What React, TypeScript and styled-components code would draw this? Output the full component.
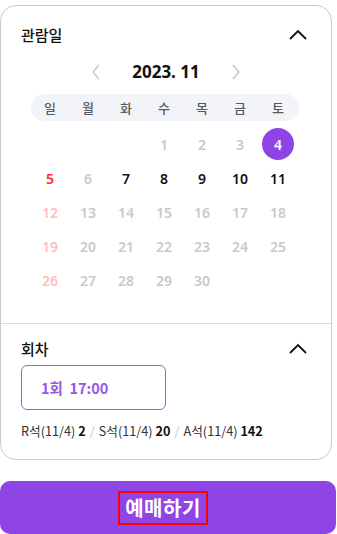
import React from "react";
import styled, { createGlobalStyle } from "styled-components";

const Global = createGlobalStyle`
  html, body { margin: 0; padding: 0; background: #ffffff; }
  body { font-family: "Noto Sans", "Noto Sans CJK KR", sans-serif; }
  * { box-sizing: border-box; }
`;

const Page = styled.div`
  width: 337px;
  padding-top: 5px;
`;

const Card = styled.div`
  width: 332px;
  border: 1px solid #c6cad2;
  border-radius: 16px;
  background: #fff;
  overflow: hidden;
`;

const Section = styled.section<{ $divider?: boolean; $pb: number }>`
  padding: 0 20px ${(p) => p.$pb}px 20px;
  border-top: ${(p) => (p.$divider ? "1px solid #d9dce1" : "none")};
`;

const Header = styled.div<{ $mt: number }>`
  display: flex;
  align-items: center;
  justify-content: space-between;
  height: 24px;
  margin-top: ${(p) => p.$mt}px;
`;

const Title = styled.h2`
  margin: 0;
  font-family: "Noto Sans CJK KR", sans-serif;
  font-size: 15px;
  font-weight: 500;
  line-height: 24px;
  color: #111;
`;

const ToggleIcon = styled.svg`
  width: 20px;
  height: 20px;
  margin-right: 3px;
`;

const MonthNav = styled.div`
  display: flex;
  align-items: center;
  justify-content: center;
  gap: 10px;
  height: 24px;
  margin-top: 13px;
  padding-left: 0px;
`;

const NavArrow = styled.svg`
  width: 20px;
  height: 20px;
`;

const MonthLabel = styled.div`
  width: 100px;
  text-align: center;
  font-size: 17px;
  font-weight: 700;
  line-height: 24px;
  color: #111;
`;

const Calendar = styled.div`
  width: 268px;
  margin-left: 10px;
`;

const WeekBar = styled.div`
  display: grid;
  grid-template-columns: repeat(7, 38px);
  height: 27px;
  margin-top: 10px;
  border-radius: 14px;
  background: #f3f4f8;
  align-items: center;
`;

const WeekDay = styled.span`
  text-align: center;
  font-family: "Noto Sans CJK KR", sans-serif;
  font-size: 13px;
  font-weight: 500;
  line-height: 27px;
  color: #555a60;
`;

const DayGrid = styled.div`
  display: grid;
  grid-template-columns: repeat(7, 38px);
  grid-auto-rows: 34px;
  margin-top: 6px;
`;

type Tone = "black" | "grey" | "red" | "pink" | "selected" | "empty";

const toneColor: Record<Tone, string> = {
  black: "#111111",
  grey: "#c9c9c9",
  red: "#ff2a2a",
  pink: "#ffbdbd",
  selected: "#ffffff",
  empty: "transparent",
};

const DayCell = styled.div`
  display: flex;
  align-items: center;
  justify-content: center;
`;

const DayNum = styled.span<{ $tone: Tone }>`
  display: flex;
  align-items: center;
  justify-content: center;
  flex: none;
  width: 32px;
  height: 32px;
  border-radius: 50%;
  font-size: 14px;
  font-weight: 600;
  color: ${(p) => toneColor[p.$tone]};
  background: ${(p) => (p.$tone === "selected" ? "#8e44e4" : "transparent")};
`;

const TimeBox = styled.div`
  display: flex;
  align-items: center;
  width: 145px;
  height: 45px;
  margin-top: 4px;
  padding-left: 19px;
  border: 1px solid #9b5de6;
  border-radius: 6px;
  font-family: "Noto Sans CJK KR", sans-serif;
  font-size: 14.5px;
  font-weight: 700;
  color: #9a55e2;
  white-space: pre;
`;

const SeatInfo = styled.div`
  margin-top: 13px;
  font-family: "Noto Sans CJK KR", sans-serif;
  font-size: 12.7px;
  line-height: 16px;
  color: #333;
`;

const SeatCount = styled.b`
  font-weight: 700;
  color: #111;
`;

const Slash = styled.span`
  color: #c8c8c8;
  margin: 0 4px;
`;

const BookButton = styled.button`
  display: flex;
  align-items: center;
  justify-content: center;
  width: 336px;
  height: 53px;
  margin-top: 21px;
  border: none;
  border-radius: 10px;
  background: #8f45e5;
  padding: 0;
  cursor: pointer;
`;

const BookLabel = styled.span`
  display: flex;
  align-items: center;
  height: 34px;
  margin-right: 10px;
  padding: 0 5px;
  border: 2px solid #ff0000;
  font-family: "Noto Sans CJK KR", sans-serif;
  font-size: 20px;
  font-weight: 700;
  color: #fff;
  letter-spacing: 0.5px;
`;

const ChevronUp = () => (
  <ToggleIcon viewBox="0 0 20 20" fill="none">
    <polyline points="2,14 10,6 18,14" stroke="#111" strokeWidth="1.8" strokeLinejoin="miter" />
  </ToggleIcon>
);

const weekDays = ["일", "월", "화", "수", "목", "금", "토"];

type Day = { n?: number; tone: Tone };

const days: Day[] = [
  { tone: "empty" },
  { tone: "empty" },
  { tone: "empty" },
  { n: 1, tone: "grey" },
  { n: 2, tone: "grey" },
  { n: 3, tone: "grey" },
  { n: 4, tone: "selected" },
  { n: 5, tone: "red" },
  { n: 6, tone: "grey" },
  { n: 7, tone: "black" },
  { n: 8, tone: "black" },
  { n: 9, tone: "black" },
  { n: 10, tone: "black" },
  { n: 11, tone: "black" },
  ...[12, 19, 26].flatMap((start) =>
    Array.from({ length: 7 }, (_, i) => start + i)
      .filter((n) => n <= 30)
      .map((n, i): Day => ({ n, tone: i === 0 ? "pink" : "grey" }))
  ),
];

const seats = [
  { label: "R석(11/4)", count: 2 },
  { label: "S석(11/4)", count: 20 },
  { label: "A석(11/4)", count: 142 },
];

export default function App() {
  return (
    <>
      <Global />
      <Page>
        <Card>
          <Section $pb={26}>
            <Header $mt={17}>
              <Title>관람일</Title>
              <ChevronUp />
            </Header>
            <MonthNav>
              <NavArrow viewBox="0 0 20 20" fill="none">
                <polyline points="13,3 7,10 13,17" stroke="#c4c4c4" strokeWidth="1.4" />
              </NavArrow>
              <MonthLabel>2023. 11</MonthLabel>
              <NavArrow viewBox="0 0 20 20" fill="none">
                <polyline points="7,3 13,10 7,17" stroke="#c4c4c4" strokeWidth="1.4" />
              </NavArrow>
            </MonthNav>
            <Calendar>
              <WeekBar>
                {weekDays.map((d) => (
                  <WeekDay key={d}>{d}</WeekDay>
                ))}
              </WeekBar>
              <DayGrid>
                {days.map((d, i) => (
                  <DayCell key={i}>
                    {d.n !== undefined && <DayNum $tone={d.tone}>{d.n}</DayNum>}
                  </DayCell>
                ))}
              </DayGrid>
            </Calendar>
          </Section>
          <Section $divider $pb={20}>
            <Header $mt={13}>
              <Title>회차</Title>
              <ChevronUp />
            </Header>
            <TimeBox>{"1회  17:00"}</TimeBox>
            <SeatInfo>
              {seats.map((s, i) => (
                <React.Fragment key={s.label}>
                  {i > 0 && <Slash>/</Slash>}
                  {s.label} <SeatCount>{s.count}</SeatCount>
                </React.Fragment>
              ))}
            </SeatInfo>
          </Section>
        </Card>
        <BookButton>
          <BookLabel>예매하기</BookLabel>
        </BookButton>
      </Page>
    </>
  );
}
